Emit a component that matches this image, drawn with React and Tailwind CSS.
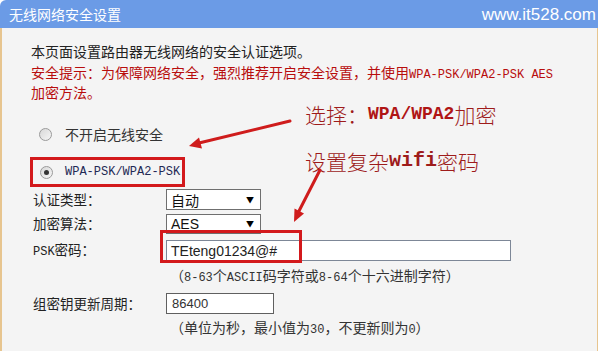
import React from "react";

const CJK = { fontFamily: '"Noto Sans CJK SC", "Liberation Sans", sans-serif' };

function M({ children, className = "" }) {
  return (
    <span className={"font-['Liberation_Mono',monospace] " + className}>{children}</span>
  );
}

function Radio({ checked }) {
  return (
    <span className="relative inline-flex h-[13px] w-[13px] shrink-0 items-center justify-center rounded-full border border-[#9a9a9a] bg-gradient-to-br from-[#d8d8d8] to-[#f6f6f6]">
      {checked && <span className="h-[5px] w-[5px] rounded-full bg-[#333]" />}
    </span>
  );
}

function Select({ value }) {
  return (
    <div className="flex h-[21px] w-[95px] items-center justify-between border border-[#6f6f6f] bg-white pl-[4px] pr-[6px]">
      <span className="text-[14px] leading-none text-[#111]" style={CJK}>{value}</span>
      <span className="text-[8px] leading-none text-black">▼</span>
    </div>
  );
}

export default function App() {
  return (
    <div className="relative h-[351px] w-[600px] overflow-hidden bg-white" style={CJK}>
      <div className="flex h-full w-[598px] flex-col">
        <div className="flex h-[28px] shrink-0 items-center justify-between rounded-tl-[6px] bg-[#6b9be6] pl-[9px] pr-[2px] text-white">
          <span className="text-[14px] leading-none">无线网络安全设置</span>
          <span className="font-['Liberation_Sans',sans-serif] text-[17px] leading-none">www.it528.com</span>
        </div>
        <div className="flex flex-1 flex-col border-l-2 border-r border-[#e7c58f] bg-[#f4f4f4] pl-[29px] pt-[13px] text-[#222]">
          <p className="text-[14px] leading-[20px]">本页面设置路由器无线网络的安全认证选项。</p>
          <p className="mt-[3px] text-[14px] leading-[17px] text-[#b80d0d]">
            安全提示：为保障网络安全，强烈推荐开启安全设置，并使用<M className="text-[12px]">WPA-PSK/WPA2-PSK AES</M>
            <br />
            加密方法。
          </p>
          <div className="mt-[23px] flex h-[20px] items-center pl-[8px]">
            <Radio />
            <span className="ml-[13px] text-[14px] leading-none text-[#333]">不开启无线安全</span>
          </div>
          <div className="-ml-[1px] mt-[13px] flex h-[30px] w-[155px] items-center border-[3px] border-[#d3191c] pl-[7px]">
            <Radio checked />
            <M className="ml-[12px] text-[12px] leading-none text-[#1f2a55]">WPA-PSK/WPA2-PSK</M>
          </div>
          <div className="ml-[2px] mt-[2px] flex h-[21px] items-center">
            <span className="w-[133px] text-[13.5px] leading-none">认证类型：</span>
            <Select value="自动" />
          </div>
          <div className="ml-[2px] mt-[3px] flex h-[21px] items-center">
            <span className="w-[133px] text-[13.5px] leading-none">加密算法：</span>
            <div className="flex h-[20px] w-[95px] items-center justify-between border border-[#6f6f6f] bg-white pl-[4px] pr-[6px]">
              <span className="font-['Liberation_Sans',sans-serif] text-[14px] leading-none text-[#111]">AES</span>
              <span className="text-[8px] leading-none text-black">▼</span>
            </div>
          </div>
          <div className="ml-[2px] mt-[6px] flex h-[21px] items-center">
            <span className="w-[133px] text-[13.5px] leading-none"><M className="text-[12px]">PSK</M>密码：</span>
            <div className="flex h-[21px] w-[345px] items-center border border-[#7d8797] bg-white pl-[4px]">
              <span className="font-['Liberation_Sans',sans-serif] text-[14px] leading-none text-[#222]">TEteng01234@#</span>
            </div>
          </div>
          <p className="ml-[139px] mt-[5px] text-[14px] leading-[18px] text-[#333]">
            （<M className="text-[12px]">8-63</M>个<M className="text-[12px]">ASCII</M>码字符或<M className="text-[12px]">8-64</M>个十六进制字符）
          </p>
          <div className="ml-[2px] mt-[6px] flex h-[21px] items-center">
            <span className="w-[133px] text-[13.5px] leading-none">组密钥更新周期：</span>
            <div className="flex h-[21px] w-[108px] items-center border border-[#5f5f5f] bg-white pl-[5px]">
              <span className="font-['Liberation_Sans',sans-serif] text-[13px] leading-none text-[#333]">86400</span>
            </div>
          </div>
          <p className="ml-[139px] mt-[4px] text-[14px] leading-[18px] text-[#333]">
            （单位为秒，最小值为<M className="text-[12px]">30</M>，不更新则为<M className="text-[12px]">0</M>）
          </p>
        </div>
      </div>

      {/* annotations */}
      <div className="absolute left-[305px] top-[101px] flex items-center whitespace-nowrap text-[21px] font-light leading-[26px] text-[#9e1b1b]">
        <span>选择：</span>
        <M className="text-[18px] font-bold text-[#b01515]">WPA/WPA2</M>
        <span>加密</span>
      </div>
      <div className="absolute left-[305px] top-[148px] flex items-center whitespace-nowrap text-[21px] font-light leading-[26px] text-[#9e1b1b]">
        <span>设置复杂</span>
        <M className="text-[20px] font-bold text-[#9e1b1b]">wifi</M>
        <span>密码</span>
      </div>
      <div className="absolute left-[160px] top-[230px] h-[33px] w-[142px] border-[3px] border-[#d3191c]" />
      <svg className="pointer-events-none absolute left-0 top-0" width="600" height="351">
        <line x1="290" y1="121" x2="199" y2="143" stroke="#cf1c1c" strokeWidth="3" strokeLinecap="round" />
        <polygon points="189,146 202,148.5 199,137.5" fill="#cf1c1c" />
        <line x1="320" y1="170" x2="299" y2="211" stroke="#cf1c1c" strokeWidth="3" strokeLinecap="round" />
        <polygon points="294,222 304,213.5 294.5,208.5" fill="#cf1c1c" />
      </svg>
    </div>
  );
}
